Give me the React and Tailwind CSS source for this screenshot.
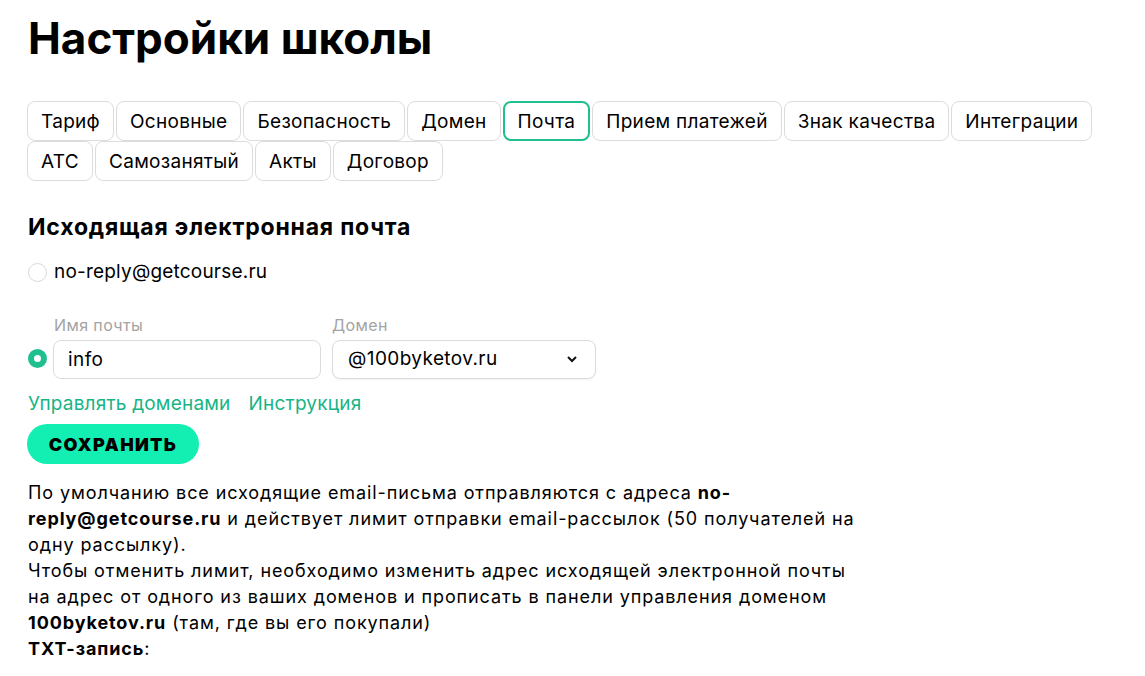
import React, { useState } from 'react';

const tabs = [
  'Тариф',
  'Основные',
  'Безопасность',
  'Домен',
  'Почта',
  'Прием платежей',
  'Знак качества',
  'Интеграции',
  'АТС',
  'Самозанятый',
  'Акты',
  'Договор',
];

const Radio = ({ checked, onClick }) => (
  <button
    type="button"
    onClick={onClick}
    className={
      checked
        ? 'w-[19px] h-[19px] rounded-full border-[6px] border-[#1fbf8f] bg-white shrink-0'
        : 'w-[19px] h-[19px] rounded-full border border-[#d9d9d9] bg-white shrink-0'
    }
  />
);

const App = () => {
  const [active, setActive] = useState('Почта');
  const [mode, setMode] = useState('custom');
  const [name, setName] = useState('info');

  return (
    <div className="min-h-screen bg-white text-black px-[28px] pt-[14px] font-['Inter','Noto_Sans',sans-serif]">
      <h1 className="text-[44px] font-bold leading-[48px]">Настройки школы</h1>

      {/* tabs */}
      <div className="flex flex-wrap gap-x-[2px] mt-[39px] -ml-px w-[1080px]">
        {tabs.map((t) => (
          <button
            key={t}
            onClick={() => setActive(t)}
            className={
              'h-[40px] px-[13px] rounded-[8px] border text-[19px] tracking-[0.3px] leading-none bg-white ' +
              (active === t ? 'border-[#1fbf8f] border-2 px-[12px]' : 'border-[#dcdcdc]')
            }
          >
            {t}
          </button>
        ))}
      </div>

      <h2 className="text-[23px] font-bold tracking-[0.8px] mt-[32px] leading-[28px]">Исходящая электронная почта</h2>

      <div className="flex items-center gap-[7px] mt-[17px]">
        <Radio checked={mode === 'default'} onClick={() => setMode('default')} />
        <span className="text-[19px] tracking-[0.2px]">no-reply@getcourse.ru</span>
      </div>

      <div className="flex items-end gap-[6px] mt-[29px]">
        <div className="pb-[11px]">
          <Radio checked={mode === 'custom'} onClick={() => setMode('custom')} />
        </div>
        <div className="flex flex-col">
          <label className="text-[16px] tracking-[0.4px] text-[#a3a3a3] leading-[18px] mb-[6px] ml-px">Имя почты</label>
          <input
            value={name}
            onChange={(e) => setName(e.target.value)}
            className="w-[268px] h-[39px] rounded-[8px] border border-[#dcdcdc] px-[14px] text-[19px] tracking-[0.4px] outline-none"
          />
        </div>
        <div className="flex flex-col ml-[5px]">
          <label className="text-[16px] tracking-[0.4px] text-[#a3a3a3] leading-[18px] mb-[6px]">Домен</label>
          <div className="w-[264px] h-[39px] rounded-[8px] border border-[#dcdcdc] px-[15px] flex items-center justify-between shadow-[0_1px_2px_rgba(0,0,0,0.06)]">
            <span className="text-[19px] tracking-[0.4px]">@100byketov.ru</span>
            <svg width="12" height="8" viewBox="0 0 12 8" className="mr-[2px]">
              <path d="M2 2l4 4 4-4" fill="none" stroke="#111" strokeWidth="2" />
            </svg>
          </div>
        </div>
      </div>

      <div className="flex gap-[18px] mt-[11px] text-[19px] tracking-[0.2px] text-[#17b485]">
        <a href="#">Управлять доменами</a>
        <a href="#">Инструкция</a>
      </div>

      <button className="mt-[6px] h-[40px] w-[172px] -ml-px rounded-full bg-[#13efb2] text-[18px] font-black tracking-[1.3px]">
        СОХРАНИТЬ
      </button>

      <p className="mt-[16px] w-[845px] text-[18px] tracking-[0.9px] leading-[26px]">
        По умолчанию все исходящие email-письма отправляются с адреса <b>no-reply@getcourse.ru</b> и действует
        лимит отправки email-рассылок (50 получателей на одну рассылку).
        <br />
        Чтобы отменить лимит, необходимо изменить адрес исходящей электронной почты на адрес от одного из ваших
        доменов и прописать в панели управления доменом <b>100byketov.ru</b> (там, где вы его покупали)
        <br />
        <b>TXT-запись</b>:
      </p>
    </div>
  );
};

export default App;
